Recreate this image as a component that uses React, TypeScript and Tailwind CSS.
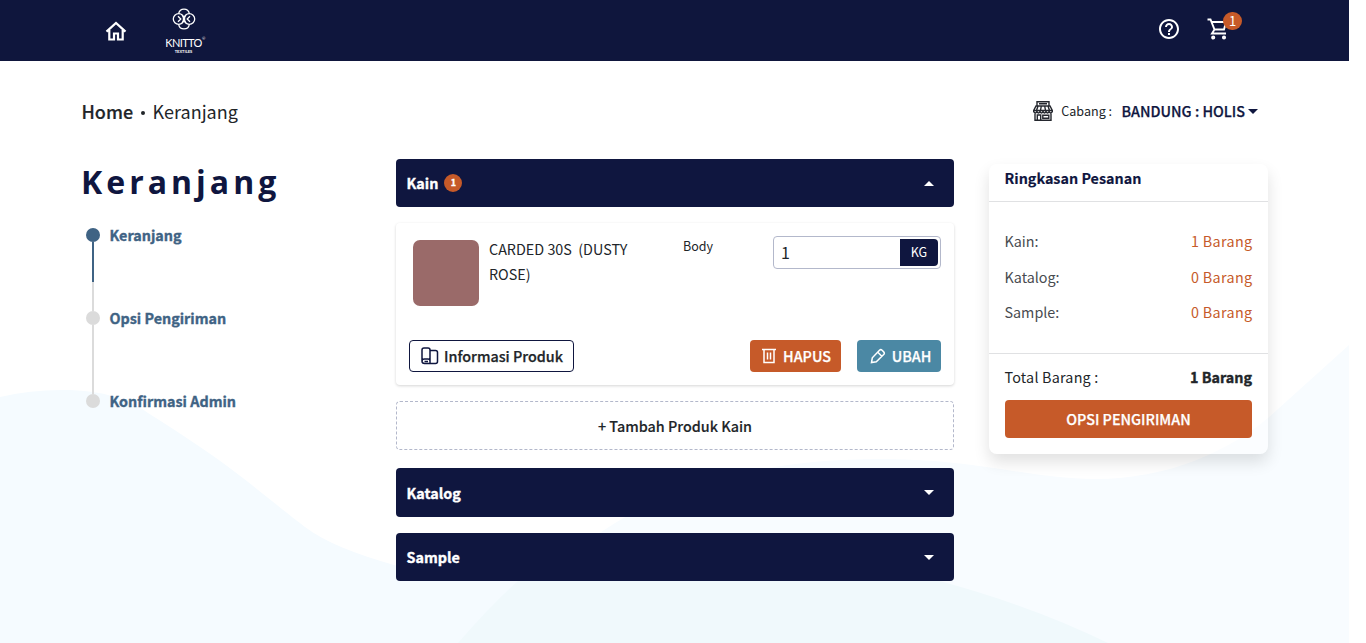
import React from "react";
import { MdHelpOutline } from "react-icons/md";

function Caret({ up = false, className = "" }: { up?: boolean; className?: string }) {
  return (
    <svg className={className} width="10" height="5" viewBox="0 0 10 5" fill="currentColor">
      <path d={up ? "M0 5 5 0l5 5z" : "M0 0h10L5 5z"} />
    </svg>
  );
}

function Waves() {
  return (
    <svg className="absolute left-0 top-[61px] -z-10" width="1349" height="582" viewBox="0 61 1349 582">
      <path fill="#f8fcff" d="M590 540C660 488 760 458 885 459C985 460 1030 479 1095 479C1170 479 1230 450 1268 418L1349 345V643H540Z" />
      <path fill="#f5fbff" d="M0 397Q30 390 62 390C105 390 130 400 148 413C180 433 210 453 235 472S285 512 305 527S355 554 394 565C450 578 540 575 560 560L600 532L560 590L460 643H0Z" />
      <path fill="#f0f9fc" d="M458 643Q510 583 545 560H850Q1000 590 1108 643Z" />
    </svg>
  );
}

function Logo() {
  return (
    <div className="flex w-[42px] flex-col items-center text-white">
      <svg width="24" height="24" viewBox="0 0 24 24" fill="none" stroke="currentColor" strokeWidth="1.3">
        <circle cx="6.700" cy="12" r="5.400" />
        <circle cx="17.300" cy="12" r="5.400" />
        <path d="M6.700 6.400a5.400 5.400 0 0 1 10.600 0M6.700 17.600a5.400 5.400 0 0 0 10.600 0M6 9.200 8.800 12 6 14.800M18 9.200 15.200 12l2.800 2.800M10.200 8q2.600 4 0 8M13.800 8q-2.600 4 0 8" />
      </svg>
      <span className="relative mt-[6px] whitespace-nowrap font-[Lato] text-[11px] leading-[12px] tracking-[-0.6px]">
        KNITTO
        <span className="absolute -right-[3px] -top-[2px] text-[4px] leading-[8px]">®</span>
      </span>
      <span className="font-[Lato] text-[4px] font-bold leading-[5px]">TEXTILES</span>
    </div>
  );
}

function Step({ label, active = false, last = false }: { label: string; active?: boolean; last?: boolean }) {
  return (
    <li className={last ? "flex h-[14px]" : "flex h-[83px]"}>
      <div className="flex w-[14px] flex-col items-center">
        <span className={active ? "size-[14px] shrink-0 rounded-full bg-[#3f6384]" : "size-[14px] shrink-0 rounded-full bg-[#dbdbdb]"} />
        {!last && <span className={active ? "h-[40px] w-[2px] bg-[#3f6384]" : "h-[40px] w-[2px] bg-[#dbdbdb]"} />}
        {!last && <span className="w-[2px] flex-1 bg-[#dbdbdb]" />}
      </div>
      <span className="ml-[9.5px] font-bold leading-[13px] text-[#3f6384] [-webkit-text-stroke:0.35px]">{label}</span>
    </li>
  );
}

function SectionBar({ title, count, open = false, className }: { title: string; count?: number; open?: boolean; className: string }) {
  return (
    <div className={"flex items-center rounded bg-[#0f163f] pl-[10.5px] pr-5 text-white " + className}>
      <span className="font-bold [-webkit-text-stroke:0.35px]">{title}</span>
      {count !== undefined && (
        <span className="ml-[6px] flex size-[18px] items-center justify-center rounded-full bg-[#c65a29] text-[9px] font-bold [-webkit-text-stroke:0.35px]">{count}</span>
      )}
      <Caret up={open} className="ml-auto" />
    </div>
  );
}

function SummaryRow({ label, value }: { label: string; value: string }) {
  return (
    <div className="flex h-[35.5px] items-center justify-between">
      <span className="text-[#484b50]">{label}</span>
      <span className="tracking-[0.35px] text-[#c65a29]">{value}</span>
    </div>
  );
}

export default function App() {
  return (
    <div className="relative isolate h-[643px] w-[1349px] overflow-hidden bg-white font-['Noto_Sans_CJK_JP',sans-serif] text-[14.35px] leading-[20px] text-[#212529]">
      <Waves />
      <header className="flex h-[61px] items-center bg-[#0f163d] pl-[105px] pr-[118px] text-white">
        <svg width="22" height="20" viewBox="0 0 22 20" fill="none" stroke="currentColor" strokeWidth="2.2">
          <path d="M1.500 10.600 11 2l9.500 8.600M4.300 9v9.500H9V12.500h4v6h4.700V9" />
        </svg>
        <div className="ml-[35.5px]">
          <Logo />
        </div>
        <MdHelpOutline className="mb-1 ml-auto size-6" />
        <div className="relative mb-1 ml-[26px]">
          <svg width="24" height="24" viewBox="0 0 24 24" fill="none" stroke="currentColor" strokeWidth="1.900">
            <path d="M.500 2.500H3.500L7.500 12.500h9.500L19 5H5M7.500 12.500 5 16.500H19" />
            <circle cx="6.200" cy="20.500" r="1.100" />
            <circle cx="17" cy="20.500" r="1.100" />
          </svg>
          <span className="absolute left-[16px] top-[-5px] flex h-[18px] w-[19px] items-center justify-center rounded-full bg-[#c65a29] text-[13px]">1</span>
        </div>
      </header>

      <div className="flex h-[98px] items-center pl-[81.5px] pr-[91px] pt-0.5">
        <div className="flex items-center text-[18px] leading-[24px]">
          <span className="font-medium [-webkit-text-stroke:0.2px]">Home</span>
          <span className="mx-[8px] mt-1 size-1 rounded-full bg-[#212529]" />
          <span className="-ml-[0.5px]">Keranjang</span>
        </div>
        <div className="ml-auto flex items-center">
          <svg width="20" height="20" viewBox="0 0 20 20" fill="none" stroke="#24272e" strokeWidth="1.400">
            <path d="M4 5V.700h12V5M6 2.800h8M3 5h14l2.300 4.500H.700zM2 12v7.300h16V12M.700 9.500v1.200q1.500 2.600 3.200 0 1.500 2.600 3.100 0 1.500 2.600 3 0 1.500 2.600 3 0 1.500 2.600 3.100 0 1.700 2.600 3.200 0V9.500M5 5 3.500 9.500M8.300 5 7.500 9.500M11.700 5l.800 4.500M15 5l1.500 4.500M4.300 19v-5h3.400v5M9.800 14.200h6v3h-6z" />
          </svg>
          <span className="ml-[8.5px] text-[12.55px]">Cabang :</span>
          <span className="ml-[9.5px] font-medium text-[#0f163f] [-webkit-text-stroke:0.25px]">BANDUNG : HOLIS</span>
          <Caret className="ml-[3px] text-[#0f163f]" />
        </div>
      </div>

      <main className="flex pl-[82px]">
        <aside className="w-[314px] pt-[3px]">
          <h1 className="-ml-px font-['Open_Sans'] text-[32px] font-bold leading-[40px] tracking-[4px] text-[#0f163f]">Keranjang</h1>
          <ul className="ml-1 mt-[26px]">
            <Step label="Keranjang" active />
            <Step label="Opsi Pengiriman" />
            <Step label="Konfirmasi Admin" last />
          </ul>
        </aside>

        <section className="w-[558px]">
          <SectionBar title="Kain" count={1} open className="h-12" />
          <div className="mt-4 h-[162px] rounded bg-white px-[13px] pt-[13px] shadow-[0_1px_3px_rgba(0,0,0,0.17)]">
            <div className="flex h-[104px]">
              <div className="ml-1 mt-1 size-[66px] rounded-[7px] bg-[#9a6a69]" />
              <div className="ml-[10px] w-[170px] whitespace-pre-line leading-[25px]">CARDED 30S&nbsp; (DUSTY{"\n"}ROSE)</div>
              <div className="ml-6 w-[90px] text-[12.5px]">Body</div>
              <div className="flex h-[33px] w-[168px] items-center rounded border border-[#b3b8cb] bg-white pl-[7px] pr-[2px]">
                <span className="pb-0.5 text-[16px]">1</span>
                <span className="ml-auto flex h-[27px] w-[38px] items-center justify-center rounded-r bg-[#0f163f] pb-px text-[12.5px] text-white">KG</span>
              </div>
            </div>
            <div className="flex items-center">
              <button className="flex h-8 w-[165px] items-center justify-center gap-[5px] rounded border border-[#0f163f] bg-white pl-px font-medium [-webkit-text-stroke:0.25px]">
                <svg width="18" height="18" viewBox="0 0 18 18" fill="none" stroke="#0f163f" strokeWidth="1.500">
                  <path d="M1 14V3q0-2 2-2h4q2 0 2 2v13.500M9 3.500h5.500q2 0 2 2v9q0 2-2 2H3.500q-2.500 0-2.500-2.200t2.500-2.200H7q2 0 2 2M3.500 14.600H7" />
                </svg>
                Informasi Produk
              </button>
              <button className="ml-auto flex h-8 w-[91px] items-center justify-center gap-[7px] rounded bg-[#c65a29] pl-[2px] font-medium text-white [-webkit-text-stroke:0.25px]">
                <svg width="14" height="16" viewBox="0 0 14 16" fill="none" stroke="currentColor" strokeWidth="1.500">
                  <path d="M0 1.500h14M2 1.500v13h10v-13M5.500 4.500v7M8.500 4.500v7" />
                </svg>
                HAPUS
              </button>
              <button className="ml-4 flex h-8 w-[84px] items-center justify-center gap-[6px] rounded bg-[#4b88a4] pl-[3px] font-medium text-white [-webkit-text-stroke:0.25px]">
                <svg width="16" height="16" viewBox="0 0 16 16" fill="none" stroke="currentColor" strokeWidth="1.500">
                  <path d="M1.500 14.500 2.300 9.800 9.500 2.300q1.300-1.300 2.600 0l1.600 1.600q1.300 1.300 0 2.600L6.300 13.700zM7.800 4.200l4 4" />
                </svg>
                UBAH
              </button>
            </div>
          </div>
          <button className="mt-4 flex h-[49px] w-full items-center justify-center rounded border border-dashed border-[#b3b8cb] bg-white font-medium [-webkit-text-stroke:0.15px]">+ Tambah Produk Kain</button>
          <SectionBar title="Katalog" className="mt-[18px] h-[49px]" />
          <SectionBar title="Sample" className="mt-4 h-12" />
        </section>

        <aside className="ml-[35px] mt-[5px] h-[290px] w-[279px] rounded-lg bg-white/40 shadow-[0_8px_16px_rgba(0,0,0,0.12)]">
          <h2 className="flex h-[38px] items-center border-b border-[#e0e1e3] px-[15.5px] pb-[9px] font-bold text-[#0f163f] [-webkit-text-stroke:0.15px]">Ringkasan Pesanan</h2>
          <div className="h-[152px] border-b border-[#e0e1e3] px-[15.5px] pt-[21.500px]">
            <SummaryRow label="Kain:" value="1 Barang" />
            <SummaryRow label="Katalog:" value="0 Barang" />
            <SummaryRow label="Sample:" value="0 Barang" />
          </div>
          <div className="px-4 pt-[13px]">
            <div className="flex justify-between">
              <span className="-ml-[0.5px] tracking-[0.2px]">Total Barang :</span>
              <span className="font-bold [-webkit-text-stroke:0.35px]">1 Barang</span>
            </div>
            <button className="mt-[13px] h-[38px] w-[247px] rounded bg-[#c65a29] font-medium text-white [-webkit-text-stroke:0.25px]">OPSI PENGIRIMAN</button>
          </div>
        </aside>
      </main>
    </div>
  );
}
